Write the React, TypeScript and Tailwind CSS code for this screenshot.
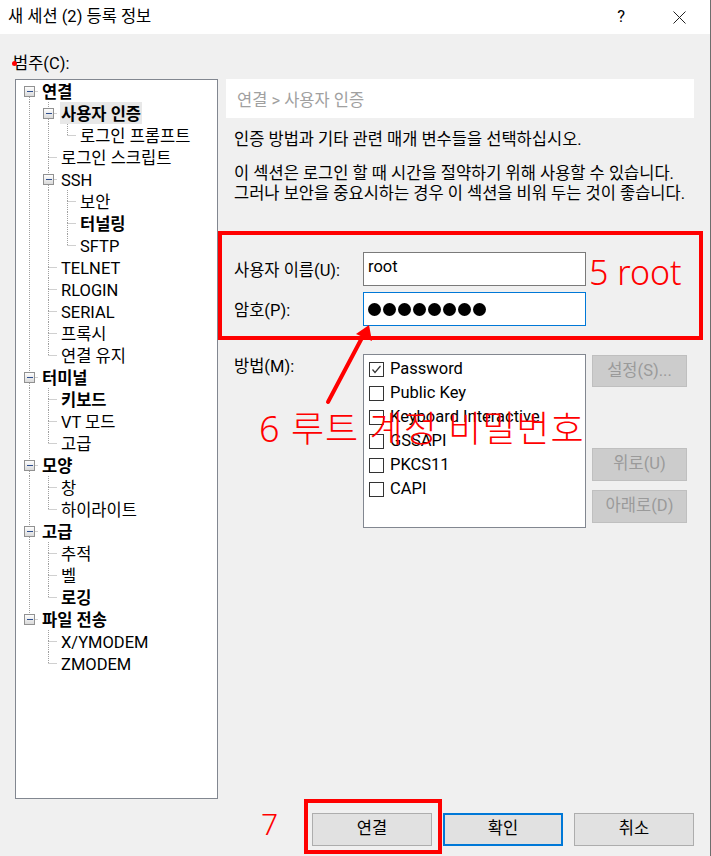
import React from 'react'

type TreeNode = { label: string; bold?: boolean; selected?: boolean; children?: TreeNode[] }

const tree: TreeNode[] = [
  {
    label: '연결',
    bold: true,
    children: [
      { label: '사용자 인증', bold: true, selected: true, children: [{ label: '로그인 프롬프트' }] },
      { label: '로그인 스크립트' },
      { label: 'SSH', children: [{ label: '보안' }, { label: '터널링', bold: true }, { label: 'SFTP' }] },
      { label: 'TELNET' },
      { label: 'RLOGIN' },
      { label: 'SERIAL' },
      { label: '프록시' },
      { label: '연결 유지' },
    ],
  },
  { label: '터미널', bold: true, children: [{ label: '키보드', bold: true }, { label: 'VT 모드' }, { label: '고급' }] },
  { label: '모양', bold: true, children: [{ label: '창' }, { label: '하이라이트' }] },
  { label: '고급', bold: true, children: [{ label: '추적' }, { label: '벨' }, { label: '로깅', bold: true }] },
  { label: '파일 전송', bold: true, children: [{ label: 'X/YMODEM' }, { label: 'ZMODEM' }] },
]

type Row = { node: TreeNode; level: number; last: boolean; first: boolean; guides: boolean[] }

function flatten(nodes: TreeNode[], level: number, guides: boolean[], out: Row[]) {
  nodes.forEach((n, i) => {
    const last = i === nodes.length - 1
    out.push({ node: n, level, last, first: level === 0 && i === 0, guides })
    if (n.children) flatten(n.children, level + 1, [...guides, !last], out)
  })
  return out
}

const rows = flatten(tree, 0, [], [])

// dotted connector lines + expander box for one tree row
function Connector({ row }: { row: Row }) {
  const w = 19 * (row.level + 1)
  const cx = 19 * row.level + 9.5
  const dot = { stroke: '#a0a0a0', strokeDasharray: '1 1', strokeWidth: 1 }
  return (
    <svg width={w} height={22} className="shrink-0">
      <defs>
        <linearGradient id="exp" x1="0" y1="0" x2="0" y2="1">
          <stop offset="0" stopColor="#ffffff" />
          <stop offset="1" stopColor="#d8d8d8" />
        </linearGradient>
      </defs>
      {row.guides.map((g, i) =>
        g ? <line key={i} x1={19 * i + 9.5} y1={0} x2={19 * i + 9.5} y2={22} {...dot} /> : null,
      )}
      {!row.first && <line x1={cx} y1={0} x2={cx} y2={11} {...dot} />}
      {!row.last && <line x1={cx} y1={11} x2={cx} y2={22} {...dot} />}
      <line x1={cx} y1={11.5} x2={w - 1} y2={11.5} {...dot} />
      {row.node.children && (
        <g>
          <rect x={cx - 5} y={6.5} width={10} height={10} fill="url(#exp)" stroke="#919191" />
          <line x1={cx - 2.5} y1={11.5} x2={cx + 3.5} y2={11.5} stroke="#2f4f8f" />
        </g>
      )}
    </svg>
  )
}

function Checkbox({ checked }: { checked?: boolean }) {
  return (
    <div className="w-[15px] h-[15px] border border-[#333333] bg-white flex items-center justify-center shrink-0">
      {checked && (
        <svg width="11" height="11" viewBox="0 0 11 11">
          <polyline points="1.5,5.5 4,8.5 9.5,2" fill="none" stroke="#333333" strokeWidth="1.2" />
        </svg>
      )}
    </div>
  )
}

const methods = [
  { label: 'Password', checked: true },
  { label: 'Public Key' },
  { label: 'Keyboard Interactive' },
  { label: 'GSSAPI' },
  { label: 'PKCS11' },
  { label: 'CAPI' },
]

export default function App() {
  return (
    <div className="relative w-[711px] h-[856px] bg-[#f0f0f0] border-r border-[#6e6e6e] text-black text-[16.5px] font-[family-name:'Roboto','Noto_Sans_CJK_KR',sans-serif] overflow-hidden">
      {/* title bar */}
      <div className="h-[34px] bg-white flex items-center">
        <span className="pl-[8px] leading-[22px]">새 세션 (2) 등록 정보</span>
        <span className="ml-auto leading-[22px]">?</span>
        <svg width="13" height="13" viewBox="0 0 13 13" className="ml-[48px] mr-[24px]">
          <path d="M0.5 0.5 L12.5 12.5 M12.5 0.5 L0.5 12.5" stroke="#222" strokeWidth="1" fill="none" />
        </svg>
      </div>

      <div className="h-[45px] pt-[19px] pl-[13px] leading-[22px]">범주(C):</div>

      <div className="flex gap-[8px] pl-[15px]">
        {/* category tree */}
        <div className="w-[203px] h-[720px] border border-[#828790] bg-white pl-[4px]">
          {rows.map((r, i) => (
            <div key={i} className="flex items-center h-[22px]">
              <Connector row={r} />
              <span
                className={`ml-[2px] px-[1px] h-[22px] pt-[4px] leading-[18px] whitespace-nowrap ${
                  r.node.bold ? 'font-bold' : ''
                } ${r.node.selected ? 'bg-[#e8e8e8]' : ''}`}
              >
                {r.node.label}
              </span>
            </div>
          ))}
        </div>

        {/* settings page */}
        <div className="w-[468px]">
          <div className="h-[39px] bg-white text-[#a0a0a0] pl-[11px] pt-[4px] flex items-center leading-[22px]">
            연결 &gt; 사용자 인증
          </div>
          <div className="pl-[8px] leading-[20px] whitespace-nowrap">
            <div className="mt-[12px]">인증 방법과 기타 관련 매개 변수들을 선택하십시오.</div>
            <div className="mt-[14px]">
              이 섹션은 로그인 할 때 시간을 절약하기 위해 사용할 수 있습니다.
              <br />
              그러나 보안을 중요시하는 경우 이 섹션을 비워 두는 것이 좋습니다.
            </div>
          </div>

          <div className="mt-[48px] pl-[8px]">
            <div className="flex items-center h-[34px]">
              <div className="w-[129px] pt-[4px] leading-[22px]">사용자 이름(U):</div>
              <div className="w-[223px] h-[34px] border border-[#7a7a7a] bg-white pl-[4px] pt-[3px] leading-[22px]">
                root
              </div>
            </div>
            <div className="flex items-center h-[34px] mt-[6px]">
              <div className="w-[129px] pt-[4px] leading-[22px]">암호(P):</div>
              <div className="w-[223px] h-[34px] border border-[#0078d7] bg-white pl-[4px] flex items-center gap-[2px]">
                {Array.from({ length: 8 }).map((_, i) => (
                  <div key={i} className="w-[13px] h-[13px] rounded-full bg-black" />
                ))}
              </div>
            </div>

            <div className="flex mt-[28px]">
              <div className="w-[129px] pt-[2px] leading-[22px]">방법(M):</div>
              <div className="w-[223px] h-[174px] border border-[#828790] bg-white pt-[2px]">
                {methods.map((m) => (
                  <div key={m.label} className="flex items-center h-[24px] pl-[5px]">
                    <Checkbox checked={m.checked} />
                    <span className="ml-[6px] leading-[22px] whitespace-nowrap">{m.label}</span>
                  </div>
                ))}
              </div>
              <div className="ml-[6px] w-[95px] flex flex-col">
                <div className="mt-[1px] h-[32px] bg-[#cccccc] border border-[#bfbfbf] text-[#9a9a9a] flex items-center justify-center">
                  설정(S)...
                </div>
                <div className="mt-[61px] h-[33px] bg-[#cccccc] border border-[#bfbfbf] text-[#9a9a9a] flex items-center justify-center">
                  위로(U)
                </div>
                <div className="mt-[9px] h-[33px] bg-[#cccccc] border border-[#bfbfbf] text-[#9a9a9a] flex items-center justify-center">
                  아래로(D)
                </div>
              </div>
            </div>
          </div>
        </div>
      </div>

      {/* dialog buttons */}
      <div className="flex justify-end gap-[11px] pr-[16px] mt-[14px]">
        <div className="w-[120px] h-[33px] bg-[#e1e1e1] border border-[#adadad] flex items-center justify-center">연결</div>
        <div className="w-[120px] h-[33px] bg-[#e1e1e1] border-2 border-[#0078d7] flex items-center justify-center">확인</div>
        <div className="w-[120px] h-[33px] bg-[#e1e1e1] border border-[#adadad] flex items-center justify-center">취소</div>
      </div>

      {/* red annotations drawn over the screenshot */}
      <div className="absolute left-[12px] top-[61px] w-[5px] h-[5px] rounded-full bg-[#ff0000]" />
      <div className="absolute left-[218px] top-[231px] w-[485px] h-[109px] border-4 border-[#ff0000]" />
      <div className="absolute left-[589px] top-[250px] text-[34px] font-light leading-[44px] text-[#ff0000] whitespace-nowrap font-[family-name:'Noto_Sans','Noto_Sans_CJK_KR',sans-serif]">
        5 root
      </div>
      <div className="absolute left-[259px] top-[406px] text-[36px] font-light tracking-[1px] leading-[46px] text-[#ff0000] whitespace-nowrap font-[family-name:'Noto_Sans','Noto_Sans_CJK_KR',sans-serif]">
        6 루트 계정 비밀번호
      </div>
      <svg className="absolute left-0 top-0 pointer-events-none" width="711" height="856">
        <line x1="328" y1="402" x2="364" y2="334" stroke="#ff0000" strokeWidth="4" strokeLinecap="round" />
        <polygon points="369,325 356,334 372,341" fill="#ff0000" />
      </svg>
      <div className="absolute left-[261px] top-[802px] text-[30px] font-light leading-[44px] text-[#ff0000] font-[family-name:'Noto_Sans',sans-serif]">
        7
      </div>
      <div className="absolute left-[304px] top-[799px] w-[138px] h-[55px] border-4 border-[#ff0000]" />
    </div>
  )
}
